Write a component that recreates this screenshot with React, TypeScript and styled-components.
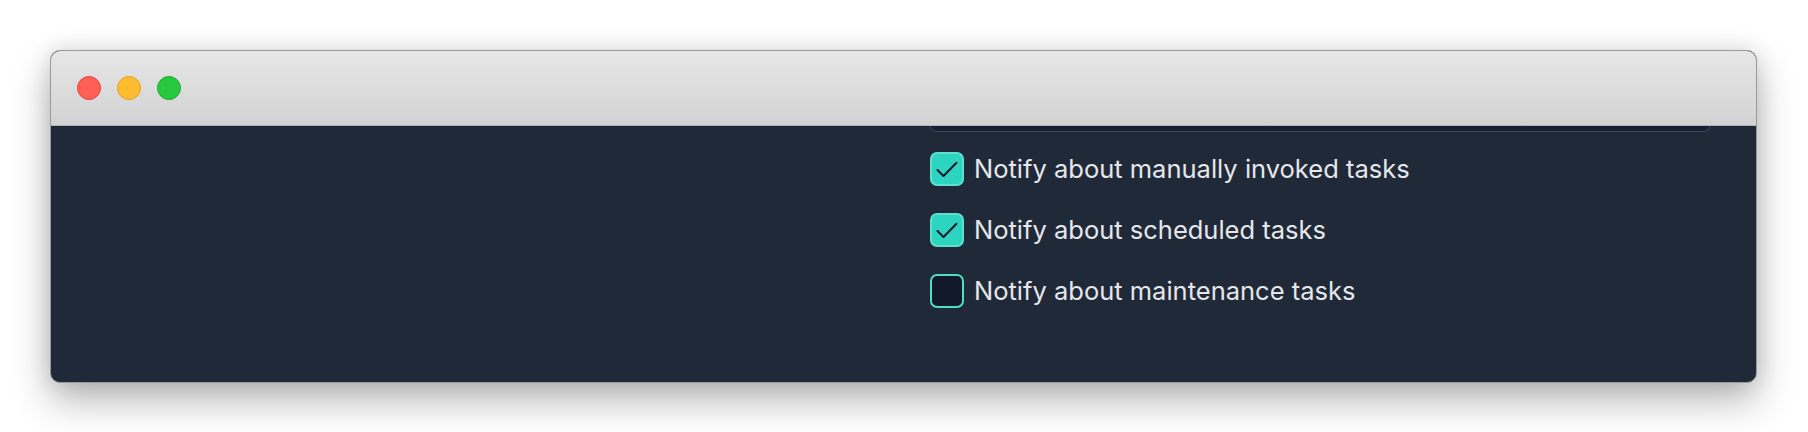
import styled, { createGlobalStyle } from 'styled-components';

interface NotifyOption {
    id: string;
    label: string;
    checked: boolean;
}

const options: NotifyOption[] = [
    { id: 'manual', label: 'Notify about manually invoked tasks', checked: true },
    { id: 'scheduled', label: 'Notify about scheduled tasks', checked: true },
    { id: 'maintenance', label: 'Notify about maintenance tasks', checked: false },
];

function App() {
    return (
        <>
            <GlobalStyle />
            <Page>
                <Window>
                    <TitleBar>
                        <Light color="#ff5f57" edge="#e0443e" />
                        <Light color="#febc2e" edge="#dea123" />
                        <Light color="#28c840" edge="#1aab29" />
                    </TitleBar>
                    <Content>
                        <Side />
                        <Main>
                            <FieldPeek />
                            <OptionList>
                                {options.map((opt) => (
                                    <OptionRow key={opt.id}>
                                        <Box checked={opt.checked}>
                                            {opt.checked && (
                                                <svg width="34" height="34" viewBox="0 0 34 34">
                                                    <path
                                                        d="M7.5 18 L13.5 24 L26.5 10.8"
                                                        fill="none"
                                                        stroke="#111827"
                                                        strokeWidth="2"
                                                        strokeLinecap="round"
                                                        strokeLinejoin="round"
                                                    />
                                                </svg>
                                            )}
                                        </Box>
                                        <Label>{opt.label}</Label>
                                    </OptionRow>
                                ))}
                            </OptionList>
                        </Main>
                    </Content>
                </Window>
            </Page>
        </>
    );
}

const GlobalStyle = createGlobalStyle`
    html, body {
        margin: 0;
        padding: 0;
        background: #ffffff;
    }
`;

const Page = styled.div`
    padding: 50px 50px;
    box-sizing: border-box;
    width: 1808px;
    height: 432px;
    font-family: Inter, 'Noto Sans', sans-serif;
`;

const Window = styled.div`
    width: 1707px;
    height: 333px;
    box-sizing: border-box;
    border: 1px solid #9a9a9a;
    border-radius: 10px;
    overflow: hidden;
    display: flex;
    flex-direction: column;
    background: #202938;
    box-shadow: 0 18px 38px rgba(0, 0, 0, 0.28), 0 0 22px rgba(0, 0, 0, 0.12);
`;

const TitleBar = styled.div`
    height: 75px;
    flex: 0 0 75px;
    box-sizing: border-box;
    display: flex;
    align-items: center;
    gap: 16px;
    padding-left: 26px;
    background: linear-gradient(#e7e7e7, #d2d2d2);
    border-bottom: 1px solid #b3b3b3;
`;

const Light = styled.span<{ color: string; edge: string }>`
    width: 24px;
    height: 24px;
    box-sizing: border-box;
    border-radius: 50%;
    background: ${({ color }) => color};
    border: 1px solid ${({ edge }) => edge};
`;

const Content = styled.div`
    flex: 1;
    display: grid;
    grid-template-columns: 1fr 780px;
    padding-right: 46px;
`;

const Side = styled.div``;

const Main = styled.div`
    display: flex;
    flex-direction: column;
`;

const FieldPeek = styled.div`
    height: 5px;
    background: #172033;
    border: 1px solid #3b4556;
    border-top: none;
    border-radius: 0 0 6px 6px;
`;

const OptionList = styled.div`
    display: flex;
    flex-direction: column;
    gap: 27px;
    margin-top: 20px;
`;

const OptionRow = styled.label`
    display: flex;
    align-items: center;
    gap: 10px;
    height: 34px;
`;

const Box = styled.span<{ checked: boolean }>`
    width: 34px;
    height: 34px;
    flex: 0 0 34px;
    box-sizing: border-box;
    border-radius: 7px;
    border: 2px solid ${({ checked }) => (checked ? '#5ee0cf' : '#4fdcc8')};
    background: ${({ checked }) => (checked ? '#2dd4bf' : '#111827')};
    display: flex;
    align-items: center;
    justify-content: center;
    & > svg {
        margin: -2px;
    }
`;

const Label = styled.span`
    font-size: 25.5px;
    color: #e5e7eb;
    line-height: 1;
    white-space: nowrap;
`;

export default App;
